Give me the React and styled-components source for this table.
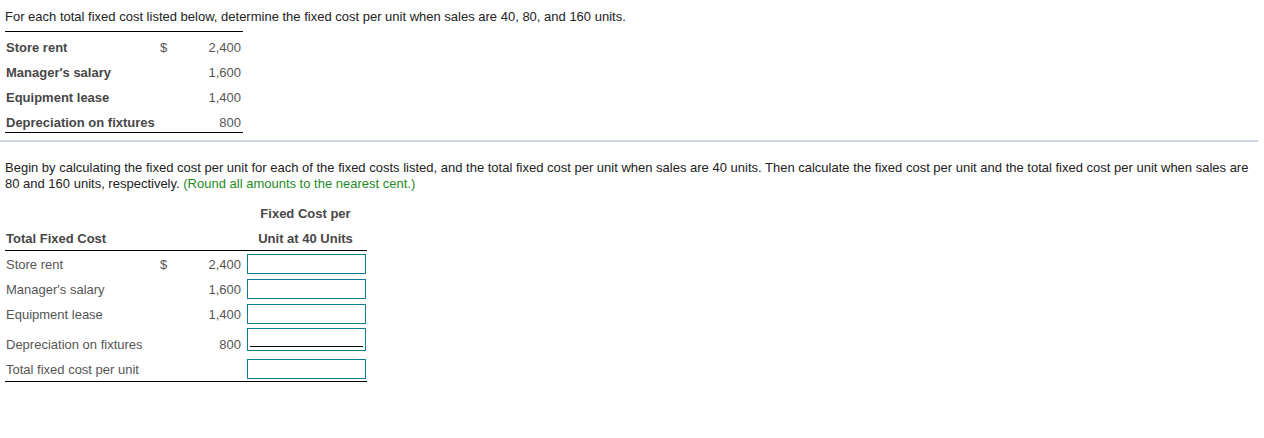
import React from "react";
import styled, { createGlobalStyle } from "styled-components";

const Global = createGlobalStyle`
  body {
    margin: 0;
    background: #fff;
    font-family: "Liberation Sans", Arial, sans-serif;
    font-size: 13px;
    color: #222;
  }
`;

const costs = [
  { name: "Store rent", amount: "2,400", dollar: true },
  { name: "Manager's salary", amount: "1,600" },
  { name: "Equipment lease", amount: "1,400" },
  { name: "Depreciation on fixtures", amount: "800", last: true },
];

const App = () => {
  return (
    <Page>
      <Global />
      <Question>
        For each total fixed cost listed below, determine the fixed cost per
        unit when sales are 40, 80, and 160 units.
      </Question>

      <GivenTable>
        <colgroup>
          <col width="150" />
          <col width="20" />
          <col width="68" />
        </colgroup>
        <tbody>
          {costs.map((c) => (
            <GivenRow key={c.name}>
              <Label $bold>{c.name}</Label>
              <Dollar>{c.dollar ? "$" : ""}</Dollar>
              <Amount>{c.amount}</Amount>
            </GivenRow>
          ))}
        </tbody>
      </GivenTable>

      <Divider />

      <Instructions>
        Begin by calculating the fixed cost per unit for each of the fixed
        costs listed, and the total fixed cost per unit when sales are 40 units.
        Then calculate the fixed cost per unit and the total fixed cost per unit
        when sales are 80 and 160 units, respectively.{" "}
        <Hint>(Round all amounts to the nearest cent.)</Hint>
      </Instructions>

      <AnswerTable>
        <colgroup>
          <col width="150" />
          <col width="20" />
          <col width="68" />
          <col width="124" />
        </colgroup>
        <thead>
          <tr>
            <HeadCell />
            <HeadCell />
            <HeadCell />
            <HeadCell $center>Fixed Cost per</HeadCell>
          </tr>
          <tr>
            <HeadCell $ruled>Total Fixed Cost</HeadCell>
            <HeadCell $ruled />
            <HeadCell $ruled />
            <HeadCell $ruled $center>
              Unit at 40 Units
            </HeadCell>
          </tr>
        </thead>
        <tbody>
          {costs.map((c) => (
            <AnswerRow key={c.name} $tall={c.last}>
              <Label>{c.name}</Label>
              <Dollar>{c.dollar ? "$" : ""}</Dollar>
              <Amount>{c.amount}</Amount>
              <InputCell $tall={c.last}>
                <AnswerBox $tall={c.last}>{c.last && <Underline />}</AnswerBox>
              </InputCell>
            </AnswerRow>
          ))}
          <AnswerRow>
            <Label>Total fixed cost per unit</Label>
            <Dollar />
            <Amount />
            <InputCell>
              <AnswerBox />
            </InputCell>
          </AnswerRow>
        </tbody>
      </AnswerTable>
    </Page>
  );
};

export default App;

const Page = styled.div`
  padding: 9px 6px 0 5px;
`;

const Question = styled.p`
  margin: 0;
  line-height: 16px;
`;

const GivenTable = styled.table`
  border-collapse: collapse;
  table-layout: fixed;
  width: 238px;
  margin-top: 6px;
  border-top: 1px solid #000;
  border-bottom: 1px solid #000;
`;

const GivenRow = styled.tr`
  td {
    height: 19px;
    padding-top: 6px;
    padding-bottom: 0;
    line-height: 16px;
    vertical-align: middle;
  }
`;

const Label = styled.td`
  font-weight: ${(p) => (p.$bold ? "bold" : "normal")};
  color: ${(p) => (p.$bold ? "#474747" : "#555")};
  padding-left: 1px;
  white-space: nowrap;
`;

const Dollar = styled.td`
  color: #555;
  padding-left: 5px;
`;

const Amount = styled.td`
  color: #555;
  text-align: right;
  padding-right: 2px;
`;

const Divider = styled.hr`
  border: none;
  border-top: 2px solid #cfd5e2;
  margin: 7px 0 0 -5px;
`;

const Instructions = styled.p`
  margin: 18px 0 0;
  line-height: 16px;
`;

const Hint = styled.span`
  color: #1f8a1f;
`;

const AnswerTable = styled.table`
  border-collapse: collapse;
  table-layout: fixed;
  width: 362px;
  margin-top: 10px;
  border-bottom: 1px solid #000;
`;

const HeadCell = styled.th`
  font-weight: bold;
  color: #474747;
  height: ${(p) => (p.$ruled ? "22px" : "24px")};
  padding: ${(p) => (p.$ruled ? "2px 0 0 1px" : "0 0 0 1px")};
  line-height: 16px;
  text-align: ${(p) => (p.$center ? "center" : "left")};
  vertical-align: middle;
  border-bottom: ${(p) => (p.$ruled ? "1px solid #000" : "none")};
`;

const AnswerRow = styled.tr`
  td {
    height: ${(p) => (p.$tall ? "25px" : "23px")};
    line-height: 16px;
    padding-top: ${(p) => (p.$tall ? "0" : "2px")};
    padding-bottom: ${(p) => (p.$tall ? "3px" : "0")};
    vertical-align: ${(p) => (p.$tall ? "bottom" : "middle")};
  }
`;

const InputCell = styled.td`
  && {
    padding: ${(p) => (p.$tall ? "2px 0 3px 4px" : "0 0 0 4px")};
    vertical-align: ${(p) => (p.$tall ? "top" : "middle")};
  }
`;

const AnswerBox = styled.div`
  box-sizing: border-box;
  width: 119px;
  height: ${(p) => (p.$tall ? "23px" : "20px")};
  border: 1px solid #0f7d96;
  background: #fff;
  position: relative;
`;

const Underline = styled.div`
  position: absolute;
  left: 2px;
  right: 2px;
  bottom: 3px;
  border-bottom: 1px solid #000;
`;
